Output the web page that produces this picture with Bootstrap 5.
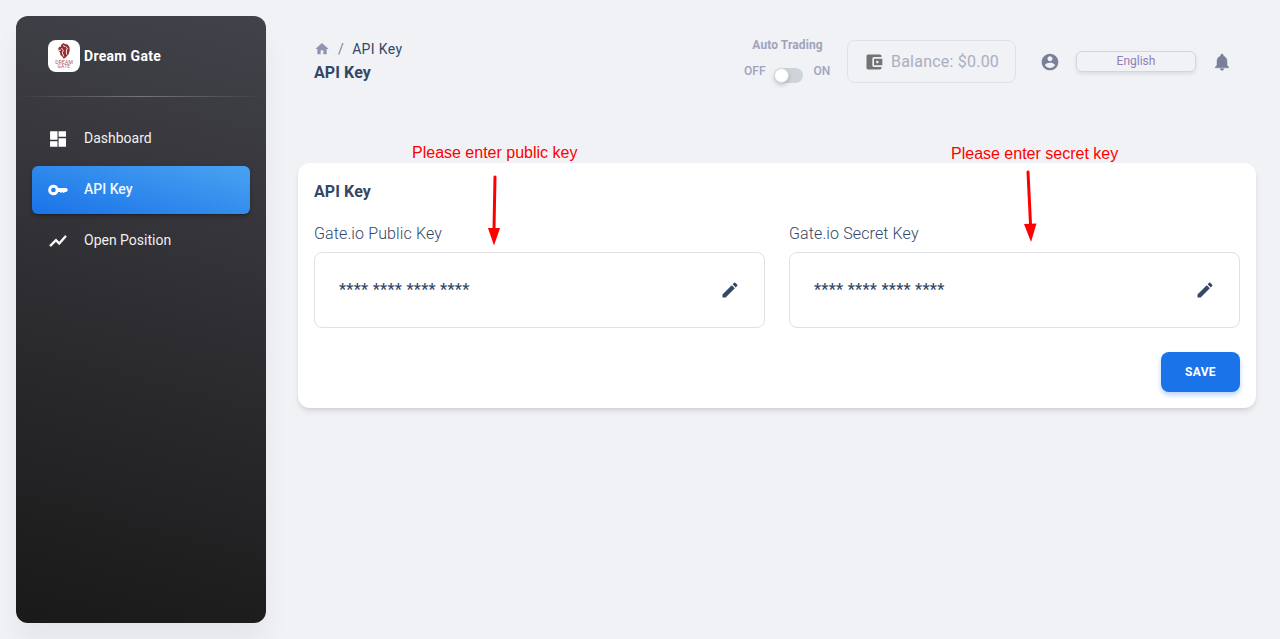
<!DOCTYPE html>
<html lang="en">
<head>
<meta charset="utf-8">
<meta name="viewport" content="width=device-width, initial-scale=1">
<title>Dream Gate - API Key</title>
<link href="https://cdn.jsdelivr.net/npm/bootstrap@5.3.0/dist/css/bootstrap.min.css" rel="stylesheet">
<style>
body{background:#f0f2f5;color:#344767;font-family:Roboto,"Liberation Sans",sans-serif;height:100vh;overflow:hidden}
svg{display:block;fill:currentColor;flex-shrink:0}
.side{width:250px;margin:16px 0 16px 16px;border-radius:12px;background:linear-gradient(195deg,#42424a,#191919);box-shadow:0 20px 27px 0 rgba(0,0,0,.05);flex-shrink:0}
.brand{height:80px;padding-left:32px;gap:4px;font-size:14px;font-weight:700;color:#fff;letter-spacing:.3px}
.brand-logo{width:32px;height:32px;border-radius:8px;background:#fff}
.rule{height:1px;background:linear-gradient(90deg,rgba(255,255,255,0),rgba(255,255,255,.3),rgba(255,255,255,0))}
.menu{padding:18px 16px 0;gap:3px}
.menu .nav-link{height:48px;padding:0 0 0 16px;gap:16px;color:#fff;font-size:14px;font-weight:400;border-radius:6px;line-height:20px}
.menu .nav-link span{opacity:.93;margin-bottom:2px}
.menu .nav-link.active{background:linear-gradient(195deg,#49a3f1,#1a73e8);font-weight:500;box-shadow:0 3px 3px 0 rgba(0,0,0,.12),0 3px 1px -2px rgba(0,0,0,.15),0 1px 5px 0 rgba(0,0,0,.12)}
.page{padding:0 24px 0 32px;min-width:0}
.topbar{height:163px;padding:40px 24px 0 16px}
.crumb{font-size:14px;line-height:18px;gap:8px;letter-spacing:.35px}
.crumb svg{color:#8f95af}
.crumb .slate{font-size:14px}
.heading{font-size:16px;font-weight:700;line-height:26px;margin-top:2px;letter-spacing:.1px}
.tools{color:#9fa3bd}
.trade{width:87px;font-size:12px;line-height:12px;font-weight:500;margin-right:16px}
.trade-title{font-weight:700;line-height:10px;margin-bottom:14px;letter-spacing:.1px}
.trade-row{height:14px;margin-bottom:4px;white-space:nowrap}
.knob-track{width:29px;height:15px;border-radius:8px;background:#ced4da;margin:9px 11px 0 8px;flex-shrink:0}
.knob{width:15px;height:15px;border-radius:50%;background:#fff;border:1px solid #d5d9de;box-shadow:0 2px 4px rgba(0,0,0,.2)}
.balance{width:169px;height:43px;border:1px solid #dee2e6;border-radius:8px;padding-left:16px;gap:7px;font-size:16px;color:#a9afc3;margin-right:24px;letter-spacing:.22px}
.balance svg{color:#737373}
.slate{color:#7b809a}
.lang{width:120px;height:21px;border:1px solid #d2d6da;border-radius:6px;color:#8f80b8;font-size:12px;line-height:18px;box-shadow:0 2px 4px rgba(0,0,0,.09);margin:11px 16px 0}
.panel{height:245px;padding:16px;border-radius:12px;background:#fff;box-shadow:0 4px 6px -1px rgba(0,0,0,.1),0 2px 4px -1px rgba(0,0,0,.06)}
.panel-title{font-size:16px;font-weight:700;line-height:26px;margin-bottom:16px;letter-spacing:.1px}
.field-name{font-size:16px;font-weight:300;line-height:26px;margin-bottom:5px;letter-spacing:.12px}
.field-box{height:76px;border:1px solid #dee2e6;border-radius:8px;padding:0 24px;font-size:16px;font-weight:500;letter-spacing:.27px}
.save{width:79px;height:40px;padding:0;background:#1a73e8;color:#fff;font-size:12px;font-weight:700;letter-spacing:.35px;border-radius:8px;box-shadow:0 3px 5px rgba(26,115,232,.3)}
.note{position:absolute;font-family:"Liberation Sans",sans-serif;font-size:16px;line-height:20px;color:#f00;white-space:nowrap}
.arrow{position:absolute;color:#f00}
</style>
</head>
<body class="d-flex">
<aside class="side">
  <div class="brand d-flex align-items-center">
    <div class="brand-logo">
      <svg width="32" height="32" viewBox="0 0 32 32" font-family="Roboto,sans-serif" font-size="5" font-weight="400">
        <path d="M13 5l2.500-2 1.500 1 2.500.5 2 2.500.2 3.500-1 3.500-3 3.500-2 1.200-1.500-2.200-1.800-1.500-.4-2.500-1.500-2.200-.2-2 1-1.500 1.500.2z" fill="#922f34"/>
        <path d="M13.500 8l1.800 2.500-1 2.300 1.500 3.700M17.500 6.500l1.800 1.500-1 3 .3 3.500M10.500 10.500l2.500-.5M15.500 5l1 2" fill="none" stroke="#fff" stroke-width=".9"/>
        <g fill="#b0555a"><text x="16.200" y="24" text-anchor="middle" textLength="18">DREAM</text>
        <text x="16" y="28.200" text-anchor="middle" textLength="13">GATE</text></g>
      </svg>
    </div>
    <span>Dream Gate</span>
  </div>
  <div class="rule"></div>
  <nav class="menu nav flex-column">
    <a class="nav-link d-flex align-items-center" href="#"><svg width="20" height="20" viewBox="0 0 24 24"><path d="M2.500 13h8.900V2.800H2.500V13zm0 8.200h8.900v-6.600H2.500v6.600zm10.200 0h8.900V11h-8.900v10.200zm0-18.400v6.600h8.900V2.800h-8.900z"/></svg><span>Dashboard</span></a>
    <a class="nav-link active d-flex align-items-center" href="#"><svg width="20" height="20" viewBox="0 0 24 24"><path fill-rule="evenodd" d="M6.500 5.800a6.200 6.200 0 1 0 5.700 8.700h2l1.400 1 1.500-1 1.600 1.200 1.800-1.200H22l2-2.400-1.800-2.400h-10A6.200 6.200 0 0 0 6.500 5.800zm0 3.400a2.800 2.800 0 1 1 0 5.600 2.800 2.800 0 0 1 0-5.600z"/></svg><span>API Key</span></a>
    <a class="nav-link d-flex align-items-center" href="#"><svg width="20" height="20" viewBox="0 0 24 24"><path d="M3.500 18.490l6-6.010 4 4L22 6.920l-1.410-1.410-7.090 7.970-4-4L2 16.990z" stroke="currentColor" stroke-width="1"/></svg><span>Open Position</span></a>
  </nav>
</aside>
<main class="page flex-grow-1">
  <header class="topbar d-flex justify-content-between">
    <div>
      <div class="crumb d-flex align-items-center"><svg width="16" height="16" viewBox="0 0 24 24"><path d="M10 20v-6h4v6h5v-8h3L12 3 2 12h3v8z"/></svg><span class="slate">/</span><span>API Key</span></div>
      <div class="heading">API Key</div>
    </div>
    <div class="tools d-flex align-items-start">
      <div class="trade">
        <div class="trade-title text-center">Auto Trading</div>
        <div class="trade-row d-flex align-items-center"><span>OFF</span><div class="knob-track"><div class="knob"></div></div><span>ON</span></div>
      </div>
      <div class="balance d-flex align-items-center"><svg width="20" height="20" viewBox="0 0 24 24"><path d="M21 18v1c0 1.1-.9 2-2 2H5c-1.11 0-2-.9-2-2V5c0-1.1.89-2 2-2h14c1.1 0 2 .9 2 2v1h-9c-1.11 0-2 .9-2 2v8c0 1.1.89 2 2 2h9zm-9-2h10V8H12v8zm4-2.5c-.83 0-1.5-.67-1.5-1.5s.67-1.5 1.5-1.5 1.5.67 1.5 1.5-.67 1.5-1.5 1.5z"/></svg><span>Balance: $0.00</span></div>
      <svg class="slate mt-2 pt-1" width="20" height="24" viewBox="0 0 24 24"><path d="M12 2C6.48 2 2 6.480 2 12s4.480 10 10 10 10-4.480 10-10S17.520 2 12 2zm0 3c1.660 0 3 1.340 3 3s-1.340 3-3 3-3-1.340-3-3 1.340-3 3-3zm0 14.200c-2.500 0-4.710-1.280-6-3.220.03-1.990 4-3.080 6-3.080 1.990 0 5.970 1.090 6 3.080-1.290 1.940-3.500 3.220-6 3.220z"/></svg>
      <div class="lang text-center">English</div>
      <svg class="slate mt-2 pt-1" width="20" height="24" viewBox="0 0 24 24"><path d="M12 22c1.1 0 2-.9 2-2h-4c0 1.1.89 2 2 2zm6-6v-5c0-3.07-1.64-5.64-4.5-6.32V4c0-.83-.67-1.5-1.5-1.5s-1.5.67-1.5 1.5v.68C7.63 5.36 6 7.92 6 11v5l-2 2v1h16v-1l-2-2z" stroke="currentColor" stroke-width=".6"/></svg>
    </div>
  </header>
  <section class="panel">
    <div class="panel-title">API Key</div>
    <div class="row gx-4">
      <div class="col-6">
        <div class="field-name">Gate.io Public Key</div>
        <div class="field-box d-flex align-items-center justify-content-between"><span>**** **** **** ****</span><svg width="20" height="20" viewBox="0 0 24 24"><path d="M3 17.25V21h3.75L17.81 9.94l-3.75-3.75L3 17.25zM20.71 7.04a1 1 0 0 0 0-1.41l-2.34-2.34a1 1 0 0 0-1.41 0l-1.83 1.83 3.75 3.75 1.83-1.83z"/></svg></div>
      </div>
      <div class="col-6">
        <div class="field-name">Gate.io Secret Key</div>
        <div class="field-box d-flex align-items-center justify-content-between"><span>**** **** **** ****</span><svg width="20" height="20" viewBox="0 0 24 24"><path d="M3 17.25V21h3.75L17.81 9.94l-3.75-3.75L3 17.25zM20.71 7.04a1 1 0 0 0 0-1.41l-2.34-2.34a1 1 0 0 0-1.41 0l-1.83 1.83 3.75 3.75 1.83-1.83z"/></svg></div>
      </div>
    </div>
    <div class="d-flex justify-content-end mt-4"><button class="btn save" type="button">SAVE</button></div>
  </section>
</main>
<!-- Guide notes over the form -->
<div class="note" style="left:412px;top:143px">Please enter public key</div>
<svg class="arrow" style="left:484px;top:173px" width="20" height="74"><path d="M11 4L10 56" stroke="currentColor" stroke-width="3" stroke-linecap="round"/><path d="M4 55h12l-6 17.500z"/></svg>
<div class="note" style="left:951px;top:144px">Please enter secret key</div>
<svg class="arrow" style="left:1020px;top:168px" width="20" height="76"><path d="M8 4L10.500 56" stroke="currentColor" stroke-width="3" stroke-linecap="round"/><path d="M4 56l12.500-.500L11 74z"/></svg>
<script src="https://cdn.jsdelivr.net/npm/bootstrap@5.3.0/dist/js/bootstrap.bundle.min.js"></script>
</body>
</html>
